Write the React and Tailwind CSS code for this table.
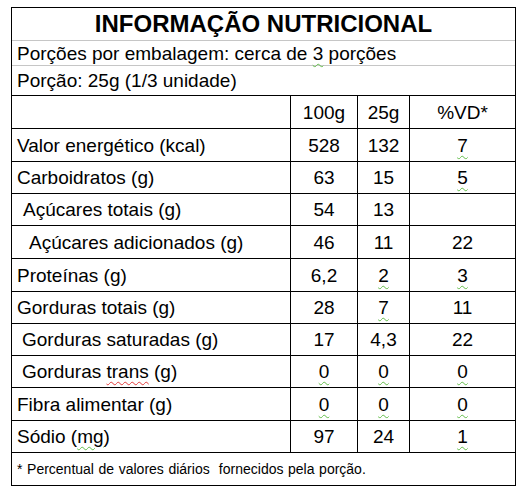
import React from "react";

const W = ({ children, red }) => (
  <span
    className={
      "underline decoration-wavy decoration-1 underline-offset-[3px] " +
      (red ? "decoration-[#e23b3b]" : "decoration-[#62bd4a]")
    }
  >
    {children}
  </span>
);

const rows = [
  { h: "h-[33px]", label: "Valor energético (kcal)", pad: "pl-[5px]", a: "528", b: "132", c: <W>7</W> },
  { h: "h-[32px]", label: "Carboidratos (g)", pad: "pl-[5px]", a: "63", b: "15", c: <W>5</W> },
  { h: "h-[32px]", label: "Açúcares totais (g)", pad: "pl-[11px]", a: "54", b: "13", c: "" },
  { h: "h-[33px]", label: "Açúcares adicionados (g)", pad: "pl-[17px]", a: "46", b: "11", c: "22" },
  { h: "h-[33px]", label: "Proteínas (g)", pad: "pl-[5px]", a: "6,2", b: <W>2</W>, c: <W>3</W> },
  { h: "h-[32px]", label: "Gorduras totais (g)", pad: "pl-[5px]", a: "28", b: <W>7</W>, c: "11" },
  { h: "h-[32px]", label: "Gorduras saturadas (g)", pad: "pl-[10px]", a: "17", b: "4,3", c: "22" },
  {
    h: "h-[32px]",
    label: (
      <>
        Gorduras <W red>trans</W> (g)
      </>
    ),
    pad: "pl-[10px]",
    a: <W>0</W>,
    b: <W>0</W>,
    c: <W>0</W>,
  },
  { h: "h-[33px]", label: "Fibra alimentar (g)", pad: "pl-[5px]", a: <W>0</W>, b: <W>0</W>, c: <W>0</W> },
  {
    h: "h-[32px]",
    label: (
      <>
        Sódio (<W>mg</W>)
      </>
    ),
    pad: "pl-[5px]",
    a: "97",
    b: "24",
    c: <W>1</W>,
  },
];

export default function App() {
  return (
    <div className="w-[528px] h-[498px] bg-white font-['Liberation_Sans',Arial,sans-serif] text-black pt-[7px] pl-[11px]">
      <div className="w-[505px] border border-black flex flex-col">
        <div className="h-[33px] border-b border-[#c6c6c6] flex items-center justify-center text-[24px] font-bold leading-none">
          INFORMAÇÃO NUTRICIONAL
        </div>
        <div className="h-[25px] border-b border-[#c6c6c6] flex items-center pl-[5px] text-[19px] leading-none whitespace-pre">
          Porções por embalagem: cerca de <W>3</W> porções
        </div>
        <div className="h-[30px] border-b border-black flex items-center pl-[5px] text-[19px] leading-none">
          Porção: 25g (1/3 unidade)
        </div>
        <div className="h-[33px] border-b border-black flex text-[19px] leading-none">
          <div className="w-[279px] border-r border-black" />
          <div className="w-[67px] border-r border-black flex items-center justify-center">100g</div>
          <div className="w-[52px] border-r border-black flex items-center justify-center">25g</div>
          <div className="flex-1 flex items-center justify-center">%VD*</div>
        </div>
        {rows.map((r, i) => (
          <div key={i} className={"border-b border-black flex text-[19px] leading-none " + r.h}>
            <div className={"w-[279px] border-r border-black flex items-center whitespace-pre " + r.pad}>{r.label}</div>
            <div className="w-[67px] border-r border-black flex items-center justify-center">{r.a}</div>
            <div className="w-[52px] border-r border-black flex items-center justify-center">{r.b}</div>
            <div className="flex-1 flex items-center justify-center">{r.c}</div>
          </div>
        ))}
        <div className="h-[32px] flex items-center pl-[5px] text-[14px] leading-none whitespace-pre [word-spacing:0.7px]">
          * Percentual de valores diários  fornecidos pela porção.
        </div>
      </div>
    </div>
  );
}
